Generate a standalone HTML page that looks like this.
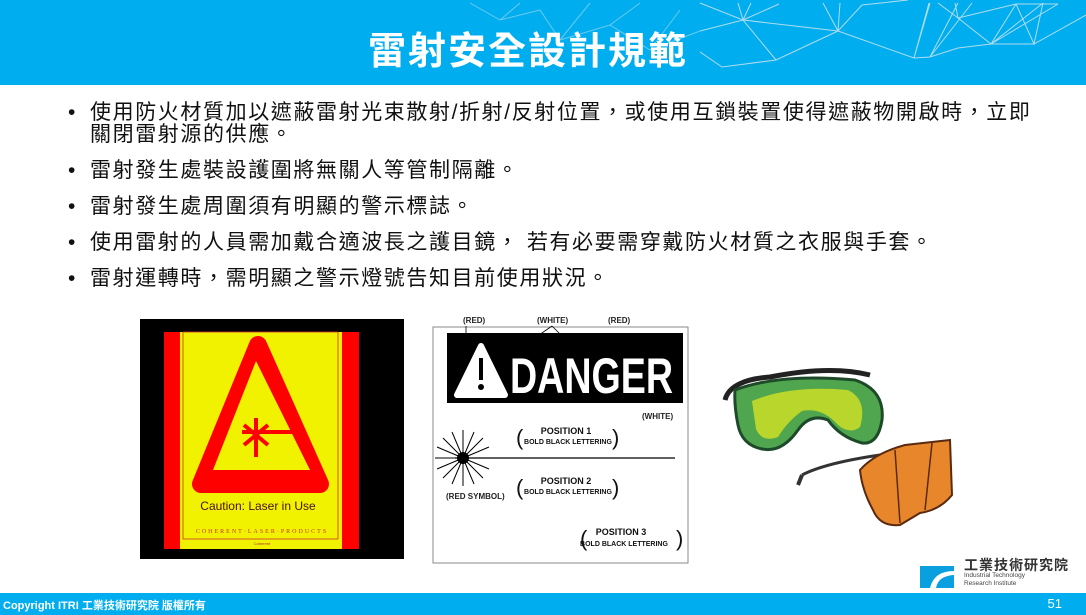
<!DOCTYPE html>
<html><head><meta charset="utf-8"><style>
body{margin:0;width:1086px;height:615px;position:relative;overflow:hidden;background:#fff;font-family:"Liberation Sans","Noto Sans CJK TC",sans-serif}
.hdr{position:absolute;left:0;top:0;width:1086px;height:85px;background:#00aeef}
.title{position:absolute;left:-15px;width:1086px;top:20px;text-align:center;color:#fff;font-size:38px;font-weight:bold;letter-spacing:2px}
ul{position:absolute;left:70px;top:102px;margin:0;padding:0;list-style:none;font-size:21px;letter-spacing:1.6px;color:#111;width:1010px}
li{position:relative;padding-left:20px;line-height:22px;margin-bottom:14px}
li:before{content:"•";position:absolute;left:-2px;top:0}
.ftr{position:absolute;left:0;top:593px;width:1086px;height:22px;background:#00aeef;color:#fff}
</style></head><body>
<div class="hdr">
<svg width="1086" height="85" style="position:absolute;left:0;top:0" stroke="#cfe4ee" stroke-width="1" fill="none" opacity=".85">
<path d="M700 3 L743 20 L776 60 L838 31 L862 5 L908 0 M700 31 L743 20 L838 31 M700 52 L722 67 L776 60 L838 31 M743 20 L738 3 M743 20 L751 3 M743 20 L779 4 M838 31 L823 3 M838 31 L840 3 M838 31 L914 58 L930 57 L958 48 L991 44 L1034 44 L1086 15 M914 58 L929 3 M914 58 L930 3 M930 57 L958 3 M930 57 L972 3 M958 18 L991 44 L1016 4 L1034 44 L1043 3 M958 18 L1016 4 L1058 4 M991 44 L1058 4 M958 18 L938 3 M958 18 L955 3 M991 44 L1043 3"/>
<path d="M470 3 L500 20 L540 10 L560 40 L610 25 L650 50 L700 31 M500 20 L520 3 M560 40 L590 3 M610 25 L640 3 M650 50 L680 10" opacity=".6"/>
</svg>
<div class="title">雷射安全設計規範</div>
</div>
<ul>
<li style="white-space:nowrap">使用防火材質加以遮蔽雷射光束散射/折射/反射位置，或使用互鎖裝置使得遮蔽物開啟時，立即<br>關閉雷射源的供應。</li>
<li>雷射發生處裝設護圍將無關人等管制隔離。</li>
<li>雷射發生處周圍須有明顯的警示標誌。</li>
<li>使用雷射的人員需加戴合適波長之護目鏡， 若有必要需穿戴防火材質之衣服與手套。</li>
<li>雷射運轉時，需明顯之警示燈號告知目前使用狀況。</li>
</ul>
<!-- laser sign -->
<svg width="264" height="240" style="position:absolute;left:140px;top:319px">
<rect width="264" height="240" fill="#000"/>
<rect x="24" y="13" width="195" height="217" fill="#f00"/>
<rect x="40" y="13" width="162" height="217" fill="#f0f200"/>
<rect x="43" y="13" width="155" height="207" fill="none" stroke="#c33" stroke-width=".8"/>
<path d="M118 26 L61 165 L180 165 Z" fill="#f00" stroke="#f00" stroke-width="18" stroke-linejoin="round"/>
<path d="M116 42 L73 151 L170 151 Z" fill="#f0f200"/>
<g stroke="#f00" stroke-width="4"><path d="M102 113 L158 113 M116 99 L116 138 M104 106 L128 126 M104 126 L128 106"/></g>
<text x="118" y="191" font-size="12" text-anchor="middle" fill="#4a1010" font-family="Liberation Sans Narrow,Liberation Sans,sans-serif">Caution: Laser in Use</text>
<text x="122" y="214" font-size="6" text-anchor="middle" fill="#c33" letter-spacing="2" font-family="Liberation Serif,serif">COHERENT·LASER·PRODUCTS</text>
<text x="122" y="226" font-size="4" text-anchor="middle" fill="#a33">Coherent</text>
</svg>
<!-- danger sign -->
<svg width="260" height="252" style="position:absolute;left:430px;top:312px" font-family="Liberation Sans,sans-serif" font-weight="bold">
<rect x="3" y="15" width="255" height="236" fill="#fff" stroke="#888"/>
<rect x="17" y="21" width="236" height="70" fill="#000"/>
<path d="M51 34 L27 83 L75 83 Z" fill="#fff" stroke="#fff" stroke-width="6" stroke-linejoin="round"/>
<rect x="49" y="46" width="4" height="22" fill="#000"/><circle cx="51" cy="75" r="3" fill="#000"/>
<text x="80" y="81" font-size="50" fill="#fff" textLength="163" lengthAdjust="spacingAndGlyphs">DANGER</text>
<g font-size="8" fill="#222"><text x="33" y="11">(RED)</text><text x="107" y="11">(WHITE)</text><text x="178" y="11">(RED)</text><text x="212" y="107">(WHITE)</text><text x="16" y="187">(RED SYMBOL)</text></g>
<path d="M36 14 L36 40 M122 14 L96 32 M122 14 L144 36" stroke="#000" stroke-width=".8"/>
<line x1="25" y1="146" x2="245" y2="146" stroke="#000" stroke-width="1.2"/>
<g stroke="#000" stroke-width="1"><path d="M33 118 L33 174 M5 146 L61 146 M13 126 L53 166 M13 166 L53 126 M22 120 L44 172 M22 172 L44 120 M7 135 L59 157 M7 157 L59 135"/></g>
<circle cx="33" cy="146" r="6" fill="#000"/>
<g font-size="9" fill="#111" text-anchor="middle"><text x="136" y="122">POSITION 1</text><text x="136" y="172">POSITION 2</text><text x="191" y="223">POSITION 3</text></g>
<g font-size="7" fill="#111" text-anchor="middle"><text x="138" y="132">BOLD BLACK LETTERING</text><text x="138" y="182">BOLD BLACK LETTERING</text><text x="194" y="234">BOLD BLACK LETTERING</text></g>
<g font-size="22" font-weight="normal" fill="#111"><text x="86" y="133">(</text><text x="182" y="133">)</text><text x="86" y="183">(</text><text x="182" y="183">)</text><text x="150" y="234">(</text><text x="246" y="234">)</text></g>
</svg>
<!-- glasses -->
<svg width="260" height="200" style="position:absolute;left:710px;top:345px">
<path d="M15 55 Q20 35 60 32 Q120 20 160 30" stroke="#222" stroke-width="5" fill="none"/>
<path d="M25 45 Q70 28 145 35 Q175 45 172 75 Q168 100 152 98 Q130 92 118 75 Q100 68 88 85 Q72 108 52 104 Q32 100 28 80 Q24 60 25 45 Z" fill="#4fa64f" stroke="#1e4a2a" stroke-width="3"/>
<path d="M42 56 Q80 40 138 45 Q158 55 150 82 Q140 90 128 80 Q112 62 92 66 Q78 76 68 92 Q52 98 46 84 Z" fill="#b8d62c"/>
<path d="M92 130 Q115 118 170 110 Q190 108 220 102 M200 108 L230 100" stroke="#333" stroke-width="3" fill="none"/>
<path d="M92 130 L88 140" stroke="#333" stroke-width="4"/>
<path d="M150 125 Q165 108 195 100 L240 95 L242 150 Q230 165 210 168 L190 180 Q170 182 163 165 Q152 145 150 125 Z" fill="#e7862b" stroke="#5a2a10" stroke-width="2"/>
<path d="M185 105 L190 178 M222 98 L215 165" stroke="#5a2a10" stroke-width="1.5"/>
</svg>
<!-- logo -->
<svg width="36" height="22" style="position:absolute;left:920px;top:566px"><path d="M0 22 L0 0 L34 0 L34 5 Q14 5 10 22 Z M16 22 Q18 10 34 9 L34 22 Z" fill="#0aa0e0"/></svg>
<div style="position:absolute;left:964px;top:555px;font-size:14px;font-weight:bold;color:#333;letter-spacing:1px">工業技術研究院</div>
<div style="position:absolute;left:964px;top:572px;font-size:6.5px;color:#444;line-height:8px">Industrial Technology<br>Research Institute</div>
<div class="ftr">
<div style="position:absolute;left:3px;top:4px;font-size:11px;font-weight:bold">Copyright ITRI 工業技術研究院 版權所有</div>
<div style="position:absolute;right:24px;top:3px;font-size:13px">51</div>
</div>
</body></html>
